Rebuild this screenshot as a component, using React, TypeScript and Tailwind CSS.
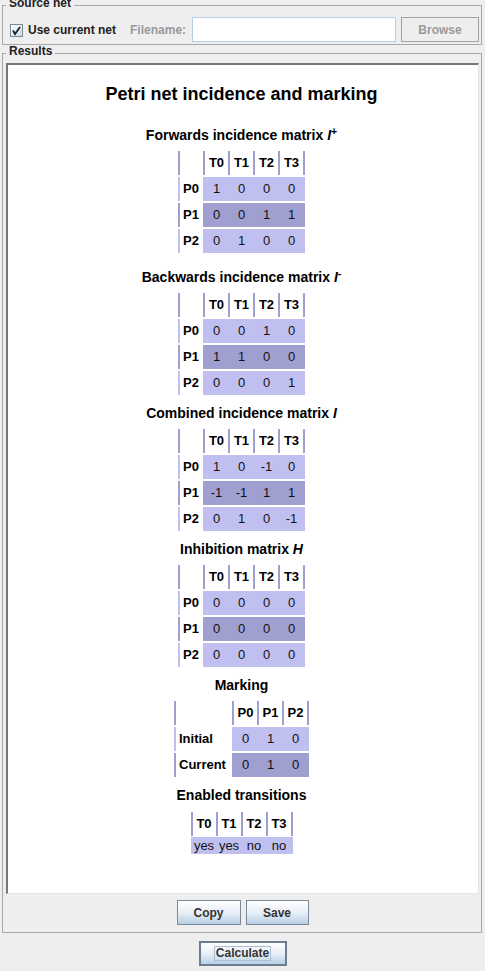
import React from 'react'

type Row = { label: string; values: string[]; dark?: boolean }

const T = ['T0', 'T1', 'T2', 'T3']

function HeaderRow({ cols, labelW }: { cols: string[]; labelW?: string }) {
	return (
		<div className="flex h-[24px]">
			{labelW && <div className={`${labelW} border-l-2 border-[#a0a0d0]`} />}
			{cols.map((c, i) => (
				<div
					key={c}
					className={`flex items-center justify-center border-l-2 border-[#a0a0d0] text-[13px] font-bold ${
						i === cols.length - 1 ? 'w-[27px] border-r-2' : 'w-[25px]'
					}`}
				>
					{c}
				</div>
			))}
		</div>
	)
}

function Matrix({ cols, rows, labelW = 'w-[25px]' }: { cols: string[]; rows: Row[]; labelW?: string }) {
	return (
		<div className="flex flex-col gap-[2px]">
			<HeaderRow cols={cols} labelW={labelW} />
			{rows.map(r => (
				<div key={r.label} className="flex h-[24px]">
					<div
						className={`${labelW} flex items-center border-l-2 pl-[3px] text-[13px] font-bold ${
							r.dark ? 'border-[#a0a0d0]' : 'border-[#c0c0f0]'
						}`}
					>
						{r.label}
					</div>
					<div className={`flex ${r.dark ? 'bg-[#a0a0d0]' : 'bg-[#c0c0f0]'}`}>
						{r.values.map((v, i) => (
							<div
								key={i}
								className={`flex items-center justify-center text-[13px] text-[#111] ${
									i === r.values.length - 1 ? 'w-[27px] px-[2px]' : 'w-[25px] pl-[2px]'
								}`}
							>
								{v}
							</div>
						))}
					</div>
				</div>
			))}
		</div>
	)
}

function Label({ children, className }: { children: React.ReactNode; className: string }) {
	return <div className={`h-[16px] text-[14px] leading-[16px] font-bold text-black ${className}`}>{children}</div>
}

function Button({ children, className }: { children: React.ReactNode; className: string }) {
	return (
		<div
			className={`flex h-[25px] items-center justify-center border border-[#7a8a99] bg-linear-to-b from-white via-[#e8eff7] to-[#b8cfe5] text-[12px] font-bold text-[#333] ${className}`}
		>
			{children}
		</div>
	)
}

export default function App() {
	return (
		<div className="flex h-[971px] w-[485px] flex-col overflow-hidden bg-[#eeeeee] font-['Liberation_Sans',Arial,sans-serif] text-black">
			<fieldset className="-mt-[3px] ml-[2px] w-[480px] border border-[#a8a8a8] pr-[2px] pb-[2px] pl-[7px]">
				<legend className="-ml-[4px] px-[3px] pb-[5px] text-[12px] leading-[12px] font-bold text-[#222]">
					Source net
				</legend>
				<div className="mt-[3px] flex h-[25px] items-center">
					<svg width="13" height="13" viewBox="0 0 13 13" className="mt-[1px]">
						<defs>
							<linearGradient id="cb" x1="0" y1="0" x2="1" y2="1">
								<stop offset="0" stopColor="#ffffff" />
								<stop offset="1" stopColor="#c9d8e7" />
							</linearGradient>
						</defs>
						<rect x="0.5" y="0.5" width="12" height="12" fill="url(#cb)" stroke="#7a8a99" />
						<path d="M3 6.5 L5 10 L10 3" fill="none" stroke="#222" strokeWidth="1.8" />
					</svg>
					<span className="ml-[5px] text-[12px] font-bold text-[#222]">Use current net</span>
					<span className="ml-[14px] text-[12px] font-bold text-[#999]">Filename:</span>
					<div className="ml-[6px] h-[25px] flex-1 border border-[#b8cfe5] bg-white" />
					<div className="ml-[5px] flex h-[25px] w-[78px] items-center justify-center border border-[#a3a3a3] text-[12px] font-bold text-[#999]">
						Browse
					</div>
				</div>
			</fieldset>

			<fieldset className="ml-[2px] w-[480px] border border-[#a8a8a8] pr-[2px] pb-[7px] pl-[3px]">
				<legend className="px-[3px] pb-[5px] text-[12px] leading-[12px] font-bold text-[#222]">Results</legend>
				<div className="mt-[1px] flex h-[831px] flex-col items-center border-t-2 border-r border-b border-l-2 border-t-[#777] border-r-[#e4e4e4] border-b-[#e4e4e4] border-l-[#777] bg-white pr-[3px]">
					<div className="mt-[18px] h-[22px] text-[18px] leading-[22px] font-bold">Petri net incidence and marking</div>

					<Label className="mt-[22px]">
						Forwards incidence matrix <span className="italic">I</span>
						<sup>+</sup>
					</Label>
					<div className="mt-[8px]">
						<Matrix
							cols={T}
							rows={[
								{ label: 'P0', values: ['1', '0', '0', '0'] },
								{ label: 'P1', values: ['0', '0', '1', '1'], dark: true },
								{ label: 'P2', values: ['0', '1', '0', '0'] },
							]}
						/>
					</div>

					<Label className="mt-[16px]">
						Backwards incidence matrix <span className="italic">I</span>
						<sup>-</sup>
					</Label>
					<div className="mt-[8px]">
						<Matrix
							cols={T}
							rows={[
								{ label: 'P0', values: ['0', '0', '1', '0'] },
								{ label: 'P1', values: ['1', '1', '0', '0'], dark: true },
								{ label: 'P2', values: ['0', '0', '0', '1'] },
							]}
						/>
					</div>

					<Label className="mt-[10px]">
						Combined incidence matrix <span className="italic">I</span>
					</Label>
					<div className="mt-[8px]">
						<Matrix
							cols={T}
							rows={[
								{ label: 'P0', values: ['1', '0', '-1', '0'] },
								{ label: 'P1', values: ['-1', '-1', '1', '1'], dark: true },
								{ label: 'P2', values: ['0', '1', '0', '-1'] },
							]}
						/>
					</div>

					<Label className="mt-[10px]">
						Inhibition matrix <span className="italic">H</span>
					</Label>
					<div className="mt-[8px]">
						<Matrix
							cols={T}
							rows={[
								{ label: 'P0', values: ['0', '0', '0', '0'] },
								{ label: 'P1', values: ['0', '0', '0', '0'], dark: true },
								{ label: 'P2', values: ['0', '0', '0', '0'] },
							]}
						/>
					</div>

					<Label className="mt-[10px]">Marking</Label>
					<div className="mt-[8px]">
						<Matrix
							cols={['P0', 'P1', 'P2']}
							labelW="w-[58px]"
							rows={[
								{ label: 'Initial', values: ['0', '1', '0'] },
								{ label: 'Current', values: ['0', '1', '0'], dark: true },
							]}
						/>
					</div>

					<Label className="mt-[10px]">Enabled transitions</Label>
					<div className="mt-[9px] flex flex-col gap-[1px]">
						<HeaderRow cols={T} />
						<div className="flex h-[17px] bg-[#c0c0f0]">
							{['yes', 'yes', 'no', 'no'].map((v, i) => (
								<div
									key={i}
									className={`flex items-center justify-center text-[13px] text-[#111] ${
										i === 3 ? 'w-[27px] px-[2px]' : 'w-[25px] pl-[2px]'
									}`}
								>
									{v}
								</div>
							))}
						</div>
					</div>
				</div>
				<div className="mt-[6px] flex justify-center gap-[5px]">
					<Button className="w-[64px]">Copy</Button>
					<Button className="w-[63px]">Save</Button>
				</div>
			</fieldset>

			<div className="mt-[8px] flex justify-center">
				<div className="flex h-[25px] w-[88px] items-center justify-center border-2 border-[#6b7d8e] bg-linear-to-b from-white via-[#e8eff7] to-[#b8cfe5]">
					<span className="border border-[#a8bfd6] px-[1px] text-[12px] leading-[13px] font-bold text-[#333]">
						Calculate
					</span>
				</div>
			</div>
		</div>
	)
}
